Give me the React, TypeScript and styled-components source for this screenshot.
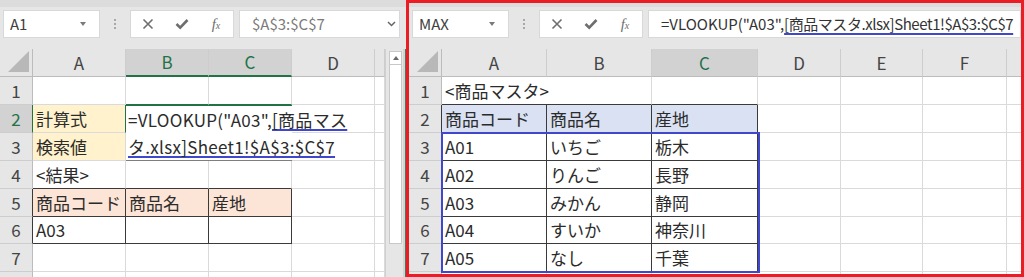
import React from 'react';
import styled, { createGlobalStyle } from 'styled-components';

const FONT = `"Noto Sans CJK JP", "Noto Sans", sans-serif`;
const GRID = '#dadada';
const DARK = '#3a3a3a';
const GREEN = '#217346';
const BLUE = '#3f48cc';
const YELLOW = '#fff2cc';
const PEACH = '#fce4d6';
const LIGHTBLUE = '#d9e1f2';

const GlobalStyle = createGlobalStyle`
  html, body { margin: 0; padding: 0; background: #ffffff; }
  body { font-family: ${FONT}; }
  #root { width: 1024px; height: 277px; overflow: hidden; }
`;

const Screen = styled.div`
  display: flex;
  width: 1024px;
  height: 277px;
  overflow: hidden;
`;

const Window = styled.section<{ $framed?: boolean; $width?: number }>`
  box-sizing: border-box;
  display: flex;
  flex-direction: column;
  flex: ${p => (p.$width ? `0 0 ${p.$width}px` : '1 1 auto')};
  min-width: 0;
  height: 277px;
  overflow: hidden;
  background: #e6e6e6;
  border: ${p => (p.$framed ? '3px solid #ec1c24' : 'none')};
`;

const Toolbar = styled.div<{ $top: number; $height: number; $endGap: number; $strip: number }>`
  box-sizing: border-box;
  flex: none;
  display: flex;
  align-items: flex-start;
  height: ${p => p.$height}px;
  padding: ${p => p.$top}px ${p => p.$endGap}px 0 3px;
  background: linear-gradient(#dcdcdc, #dcdcdc) top left / 100% ${p => p.$strip}px no-repeat, #e6e6e6;
`;

const NameBox = styled.div`
  box-sizing: border-box;
  flex: 0 0 97px;
  height: 28px;
  display: flex;
  align-items: center;
  justify-content: space-between;
  padding: 0 13px 0 6px;
  background: #fff;
  border: 1px solid #d8d8d8;
  font: 15px/26px ${FONT};
  color: #404040;
`;

const DropTriangle = styled.span`
  width: 0;
  height: 0;
  border-left: 3.5px solid transparent;
  border-right: 3.5px solid transparent;
  border-top: 4px solid #7a7a7a;
`;

const Grip = styled.div`
  flex: 0 0 30px;
  height: 28px;
  display: flex;
  flex-direction: column;
  align-items: center;
  justify-content: center;
  gap: 2px;
`;

const GripDot = styled.i`
  display: block;
  width: 2px;
  height: 2px;
  background: #a8a8a8;
`;

const ButtonBox = styled.div`
  box-sizing: border-box;
  flex: 0 0 104px;
  height: 28px;
  display: flex;
  background: #fff;
  border: 1px solid #d8d8d8;
`;

const ToolSlot = styled.span`
  flex: 1;
  display: flex;
  align-items: center;
  justify-content: center;
  color: #6e6e6e;
`;

const FxLabel = styled.span`
  font-family: "Liberation Serif", serif;
  font-style: italic;
  color: #6e6e6e;
  font-size: 15px;
  line-height: 1;
  & > small { font-size: 10px; }
`;

const FormulaBox = styled.div`
  box-sizing: border-box;
  flex: 1 1 auto;
  min-width: 0;
  margin-left: 5px;
  height: 28px;
  display: flex;
  align-items: center;
  justify-content: space-between;
  padding: 0 3px 0 12px;
  background: #fff;
  border: 1px solid #d8d8d8;
  overflow: hidden;
`;

const FormulaText = styled.span<{ $muted?: boolean }>`
  font: 15px/26px ${FONT};
  color: ${p => (p.$muted ? '#7a7a7a' : '#333')};
  white-space: nowrap;
`;

const RefText = styled.span<{ $offset?: number; $tight?: boolean }>`
  text-decoration: underline;
  text-decoration-color: ${BLUE};
  text-decoration-thickness: 2px;
  text-decoration-skip-ink: none;
  text-underline-offset: ${p => p.$offset ?? 3}px;
  letter-spacing: ${p => (p.$tight ? '-0.45px' : 'inherit')};
`;

const Body = styled.div`
  flex: 1 1 auto;
  min-height: 0;
  display: flex;
`;

const Sheet = styled.div<{ $cols: string; $width?: number }>`
  flex: ${p => (p.$width ? `0 0 ${p.$width}px` : '1 1 auto')};
  min-width: 0;
  display: grid;
  grid-template-columns: ${p => p.$cols};
  grid-template-rows: 28px repeat(5, 28px) 27px 28px 28px;
  align-content: start;
  background: #fff;
  overflow: hidden;
`;

const ColHead = styled.div<{ $active?: boolean; $underline?: boolean; $col: number }>`
  grid-row: 1;
  grid-column: ${p => p.$col};
  box-sizing: border-box;
  display: flex;
  align-items: flex-end;
  justify-content: center;
  background: ${p => (p.$active ? '#d2d2d2' : '#e6e6e6')};
  border-right: 1px solid #cdcdcd;
  border-bottom: ${p => (p.$underline ? `2px solid ${GREEN}` : '1px solid #bcbcbc')};
  color: ${p => (p.$active ? GREEN : '#444')};
  font: 17px/26px ${FONT};
  overflow: hidden;
`;

const Corner = styled.div`
  grid-row: 1;
  grid-column: 1;
  box-sizing: border-box;
  display: flex;
  align-items: flex-end;
  justify-content: flex-end;
  padding: 0 3px 4px 0;
  background: #e6e6e6;
  border-right: 1px solid #bcbcbc;
  border-bottom: 1px solid #bcbcbc;
`;

const CornerTriangle = styled.span`
  width: 0;
  height: 0;
  border-left: 21px solid transparent;
  border-bottom: 21px solid #b8b8b8;
`;

const RowHead = styled.div<{ $active?: boolean; $edge?: string; $row: number }>`
  grid-row: ${p => p.$row};
  grid-column: 1;
  box-sizing: border-box;
  display: flex;
  align-items: flex-end;
  justify-content: center;
  background: ${p => (p.$active ? '#d2d2d2' : '#e6e6e6')};
  border-right: 1px solid ${p => p.$edge ?? '#bcbcbc'};
  border-bottom: 1px solid #cdcdcd;
  color: ${p => (p.$active ? GREEN : '#444')};
  font: 17px/26px ${FONT};
`;

const Cell = styled.div<{ $bg?: string; $right?: string; $bottom?: string; $span: number; $row: number; $col: number }>`
  grid-row: ${p => p.$row};
  grid-column: ${p => p.$col} / span ${p => p.$span};
  box-sizing: border-box;
  min-width: 0;
  display: flex;
  align-items: flex-end;
  padding-left: 3px;
  background: ${p => p.$bg ?? '#fff'};
  border-right: 1px solid ${p => p.$right ?? GRID};
  border-bottom: 1px solid ${p => p.$bottom ?? GRID};
  font: 17px/26px ${FONT};
  color: #2b2b2b;
  white-space: nowrap;
`;

const EditCell = styled.div`
  grid-column: 3 / 5;
  grid-row: 3 / 5;
  box-sizing: border-box;
  display: flex;
  flex-direction: column;
  background: #fff;
  border-top: 1px solid ${GREEN};
  border-bottom: 1px solid #7f7f7f;
  padding-left: 2px;
  font: 17px/26px ${FONT};
  letter-spacing: 0.3px;
  color: #2b2b2b;
  white-space: nowrap;
`;

const EditLine = styled.div`
  height: 27px;
  display: flex;
  align-items: flex-end;
`;

const RangeBox = styled.div<{ $col: string; $row: string }>`
  grid-column: ${p => p.$col};
  grid-row: ${p => p.$row};
  margin: -1px -2px -1px -1px;
  border: 2px solid ${BLUE};
  pointer-events: none;
`;

const ScrollBar = styled.div`
  box-sizing: border-box;
  flex: 0 0 18px;
  display: flex;
  flex-direction: column;
  padding: 2px 1px 0 3px;
  background: #e6e6e6;
  border-left: 1px solid #d0d0d0;
`;

const ScrollButton = styled.div`
  box-sizing: border-box;
  height: 14px;
  display: flex;
  align-items: center;
  justify-content: center;
  background: #fff;
  border: 1px solid #c8c8c8;
`;

const UpTriangle = styled.span`
  width: 0;
  height: 0;
  border-left: 3.5px solid transparent;
  border-right: 3.5px solid transparent;
  border-bottom: 4px solid #6a6a6a;
`;

const ScrollThumb = styled.div`
  box-sizing: border-box;
  height: 179px;
  background: #fff;
  border: 1px solid #c8c8c8;
  border-top: none;
`;

const Divider = styled.div`
  box-sizing: border-box;
  flex: 0 0 3px;
  background: #d4d4d4;
  border-right: 1px solid #56705c;
`;

type CellSpec = { text?: React.ReactNode; bg?: string; right?: string; bottom?: string; span?: number; col?: number };
type RowSpec = { num: number; hideNum?: boolean; active?: boolean; edge?: string; cells: CellSpec[] };
type HeadSpec = { label: string; active?: boolean; underline?: boolean };

const blank = (n: number): CellSpec[] => Array.from({ length: n }, () => ({}));
const boxed = (text: string, bg?: string): CellSpec => ({ text, bg, right: DARK, bottom: DARK });

const leftHeads: HeadSpec[] = [
  { label: 'A' },
  { label: 'B', active: true, underline: true },
  { label: 'C', active: true, underline: true },
  { label: 'D' },
  { label: '' },
];

const leftRows: RowSpec[] = [
  { num: 1, cells: [{}, { bottom: GREEN }, { bottom: GREEN }, {}, {}] },
  { num: 2, active: true, edge: GREEN, cells: [{ text: '計算式', bg: YELLOW, right: GREEN }, { col: 5 }, {}] },
  { num: 3, cells: [{ text: '検索値', bg: YELLOW }, { col: 5 }, {}] },
  { num: 4, cells: [{ text: '<結果>', bottom: DARK }, { bottom: DARK }, { bottom: DARK }, {}, {}] },
  { num: 5, edge: DARK, cells: [boxed('商品コード', PEACH), boxed('商品名', PEACH), boxed('産地', PEACH), {}, {}] },
  { num: 6, edge: DARK, cells: [boxed('A03'), boxed(''), boxed(''), {}, {}] },
  { num: 7, cells: blank(5) },
  { num: 8, hideNum: true, cells: blank(5) },
];

const rightHeads: HeadSpec[] = [
  { label: 'A' },
  { label: 'B' },
  { label: 'C', active: true },
  { label: 'D' },
  { label: 'E' },
  { label: 'F' },
  { label: '' },
];

const products = [
  ['A01', 'いちご', '栃木'],
  ['A02', 'りんご', '長野'],
  ['A03', 'みかん', '静岡'],
  ['A04', 'すいか', '神奈川'],
  ['A05', 'なし', '千葉'],
];

const rightRows: RowSpec[] = [
  { num: 1, cells: [{ text: '<商品マスタ>', span: 2, bottom: DARK }, { bottom: DARK }, {}, {}, {}, {}] },
  { num: 2, edge: DARK, cells: [...['商品コード', '商品名', '産地'].map(t => boxed(t, LIGHTBLUE)), ...blank(4)] },
  ...products.map((p, i) => ({ num: i + 3, edge: DARK, cells: [...p.map(t => boxed(t)), ...blank(4)] })),
  { num: 8, hideNum: true, cells: blank(7) },
];

function HeaderRow({ heads }: { heads: HeadSpec[] }) {
  return (
    <>
      <Corner>
        <CornerTriangle />
      </Corner>
      {heads.map((h, i) => (
        <ColHead key={i} $col={i + 2} $active={h.active} $underline={h.underline}>
          {h.label}
        </ColHead>
      ))}
    </>
  );
}

function SheetRows({ rows }: { rows: RowSpec[] }) {
  return (
    <>
      {rows.map((r, ri) => {
        const gridRow = ri + 2;
        let col = 2;
        return (
          <React.Fragment key={r.num}>
            <RowHead $row={gridRow} $active={r.active} $edge={r.edge}>
              {r.hideNum ? '' : r.num}
            </RowHead>
            {r.cells.map((c, i) => {
              if (c.col) col = c.col;
              const span = c.span ?? 1;
              const at = col;
              col += span;
              return (
                <Cell
                  key={i}
                  $row={gridRow}
                  $col={at}
                  $span={span}
                  $bg={c.bg}
                  $right={c.right}
                  $bottom={c.bottom}
                >
                  {c.text}
                </Cell>
              );
            })}
          </React.Fragment>
        );
      })}
    </>
  );
}

function XIcon() {
  return (
    <svg width="12" height="12" viewBox="0 0 12 12">
      <path d="M1.5 1.5 L10.5 10.5 M10.5 1.5 L1.5 10.5" stroke="#6e6e6e" strokeWidth="1.6" fill="none" />
    </svg>
  );
}

function CheckIcon() {
  return (
    <svg width="14" height="12" viewBox="0 0 14 12">
      <path d="M1.5 6 L5.2 9.6 L12.5 2" stroke="#6e6e6e" strokeWidth="2.6" fill="none" />
    </svg>
  );
}

function Chevron() {
  return (
    <svg width="9" height="6" viewBox="0 0 9 6">
      <path d="M1 1 L4.5 4.5 L8 1" stroke="#666" strokeWidth="1.5" fill="none" />
    </svg>
  );
}

function FormulaToolbar(props: {
  name: string;
  top: number;
  height: number;
  endGap: number;
  strip: number;
  formula: React.ReactNode;
  muted?: boolean;
  chevron?: boolean;
}) {
  return (
    <Toolbar $top={props.top} $height={props.height} $endGap={props.endGap} $strip={props.strip}>
      <NameBox>
        {props.name}
        <DropTriangle />
      </NameBox>
      <Grip>
        <GripDot />
        <GripDot />
        <GripDot />
      </Grip>
      <ButtonBox>
        <ToolSlot>
          <XIcon />
        </ToolSlot>
        <ToolSlot>
          <CheckIcon />
        </ToolSlot>
        <ToolSlot>
          <FxLabel>
            f<small>x</small>
          </FxLabel>
        </ToolSlot>
      </ButtonBox>
      <FormulaBox>
        <FormulaText $muted={props.muted}>{props.formula}</FormulaText>
        {props.chevron && <Chevron />}
      </FormulaBox>
    </Toolbar>
  );
}

export default function App() {
  return (
    <>
      <GlobalStyle />
      <Screen>
        <Window $width={406}>
          <FormulaToolbar name="A1" top={10} height={49} endGap={6} strip={7} formula="$A$3:$C$7" muted chevron />
          <Body>
            <Sheet $width={385} $cols="33px 93px 83px 83px 83px 10px">
              <HeaderRow heads={leftHeads} />
              <SheetRows rows={leftRows} />
              <EditCell>
                <EditLine>
                  =VLOOKUP("A03",<RefText $offset={2}>[商品マス</RefText>
                </EditLine>
                <EditLine>
                  <RefText $offset={2}>タ.xlsx]Sheet1!$A$3:$C$7</RefText>
                </EditLine>
              </EditCell>
            </Sheet>
            <ScrollBar>
              <ScrollButton>
                <UpTriangle />
              </ScrollButton>
              <ScrollThumb />
            </ScrollBar>
            <Divider />
          </Body>
        </Window>
        <Window $framed>
          <FormulaToolbar
            name="MAX"
            top={7}
            height={46}
            endGap={0}
            strip={4}
            formula={
              <>
                =VLOOKUP("A03",<RefText $tight>[商品マスタ.xlsx]Sheet1!$A$3:$C$7</RefText>
              </>
            }
          />
          <Body>
            <Sheet $cols="33px 105px 105px 106px 83px 82px 84px 24px">
              <HeaderRow heads={rightHeads} />
              <SheetRows rows={rightRows} />
              <RangeBox $col="2 / 5" $row="4 / 9" />
            </Sheet>
          </Body>
        </Window>
      </Screen>
    </>
  );
}
